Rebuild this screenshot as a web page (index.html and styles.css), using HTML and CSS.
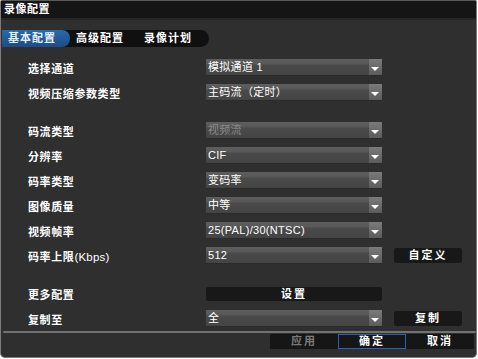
FILE: index.html
```html
<!DOCTYPE html>
<html lang="zh-CN">
<head>
    <meta charset="UTF-8">
    <title>录像配置</title>
    <link rel="stylesheet" href="styles.css">
</head>
<body>
    <div class="window">
        <div class="titlebar">录像配置</div>

        <div class="tabs">
            <div class="tab active">基本配置</div>
            <div class="tab">高级配置</div>
            <div class="tab">录像计划</div>
        </div>

        <div class="form">
            <div class="row">
                <div class="label">选择通道</div>
                <div class="select"><span>模拟通道 1</span><i class="arrow"></i></div>
            </div>
            <div class="row">
                <div class="label">视频压缩参数类型</div>
                <div class="select"><span>主码流（定时）</span><i class="arrow"></i></div>
            </div>

            <div class="row group">
                <div class="label">码流类型</div>
                <div class="select disabled"><span>视频流</span><i class="arrow"></i></div>
            </div>
            <div class="row">
                <div class="label">分辨率</div>
                <div class="select"><span>CIF</span><i class="arrow"></i></div>
            </div>
            <div class="row">
                <div class="label">码率类型</div>
                <div class="select"><span>变码率</span><i class="arrow"></i></div>
            </div>
            <div class="row">
                <div class="label">图像质量</div>
                <div class="select"><span>中等</span><i class="arrow"></i></div>
            </div>
            <div class="row">
                <div class="label">视频帧率</div>
                <div class="select"><span>25(PAL)/30(NTSC)</span><i class="arrow"></i></div>
            </div>
            <div class="row">
                <div class="label">码率上限<em>(Kbps)</em></div>
                <div class="select"><span>512</span><i class="arrow"></i></div>
                <div class="btn">自定义</div>
            </div>

            <div class="row group">
                <div class="label">更多配置</div>
                <div class="btn wide">设置</div>
            </div>
            <div class="row">
                <div class="label">复制至</div>
                <div class="select"><span>全</span><i class="arrow"></i></div>
                <div class="btn">复制</div>
            </div>
        </div>

        <div class="divider"></div>

        <div class="footer">
            <div class="foot-btn disabled">应用</div>
            <div class="foot-btn focus">确定</div>
            <div class="foot-btn">取消</div>
        </div>
    </div>
</body>
</html>
```

FILE: styles.css
```css
/* 基本 */
body {
    margin: 0;
    background: #fff;
    font-family: "Liberation Sans", "Noto Sans CJK SC", sans-serif;
    font-size: 11px;
    color: #fff;
}
.window {
    width: 475px;
    height: 356px;
    background: #2f2f2f;
    border: 1px solid #7c7c7c;
    border-top-color: #5a5a5a;
    border-radius: 2px 2px 5px 5px;
    overflow: hidden;
}
.titlebar {
    height: 17px;
    line-height: 17px;
    padding-left: 3px;
    background: #151515;
    border-bottom: 2px solid #262626;
    font-weight: bold;
    letter-spacing: 0.5px;
}

/* 标签页 */
.tabs {
    display: flex;
    width: 207px;
    height: 17px;
    margin: 10px 0 0 1px;
    background: #101010;
    border-radius: 0 9px 9px 0;
}
.tab {
    height: 17px;
    line-height: 17px;
    padding-left: 6px;
    width: 62px;
    font-weight: bold;
    letter-spacing: 1px;
}
.tab.active {
    background: linear-gradient(#2a69ab, #1c4c86);
    border-radius: 0 8px 8px 0;
    color: #e8f0ff;
}

/* 表单 */
.form {
    display: flex;
    flex-direction: column;
    gap: 8px;
    padding: 12px 0 0 27px;
}
.row {
    display: grid;
    grid-template-columns: 166px 176px 68px;
    column-gap: 12px;
    height: 17px;
    align-items: center;
}
.row.group {
    margin-top: 13px;
}
.label {
    letter-spacing: 0.6px;
    font-weight: bold;
}
.label em {
    font-style: normal;
    font-weight: normal;
    font-size: 11.5px;
    letter-spacing: 0.2px;
}
.select {
    display: flex;
    height: 17px;
    background: linear-gradient(#5e5e5e 0, #585858 30%, #4a4a4a 38%, #444 100%);
    border-bottom: 1px solid #2a2a2a;
    box-sizing: border-box;
}
.select span {
    flex: 1;
    line-height: 17px;
    padding-left: 2px;
    letter-spacing: 0.3px;
}
.select.disabled span {
    color: #8c8c8c;
}
.arrow {
    position: relative;
    width: 13px;
    background: linear-gradient(#7a7a7a, #5c5c5c);
}
.arrow::after {
    content: "";
    position: absolute;
    left: 2px;
    top: 8px;
    border-left: 4px solid transparent;
    border-right: 4px solid transparent;
    border-top: 4px solid #fff;
}
.btn {
    height: 15px;
    line-height: 15px;
    text-align: center;
    background: #181818;
    border-radius: 2px;
    font-weight: bold;
    letter-spacing: 2px;
}
.btn.wide {
    height: 14px;
    line-height: 14px;
}

/* 底部 */
.divider {
    height: 2px;
    margin: 4px 0 0 2px;
    background: #727272;
    border-radius: 1px;
}
.footer {
    display: flex;
    justify-content: flex-end;
    padding: 1px 2px 0 0;
}
.foot-btn {
    width: 68px;
    height: 15px;
    line-height: 15px;
    text-align: center;
    background: #161616;
    font-weight: bold;
    letter-spacing: 2px;
    box-sizing: border-box;
}
.foot-btn.disabled {
    color: #7a7a7a;
}
.foot-btn.focus {
    border: 1px solid #2f5fb8;
    line-height: 13px;
}
```
